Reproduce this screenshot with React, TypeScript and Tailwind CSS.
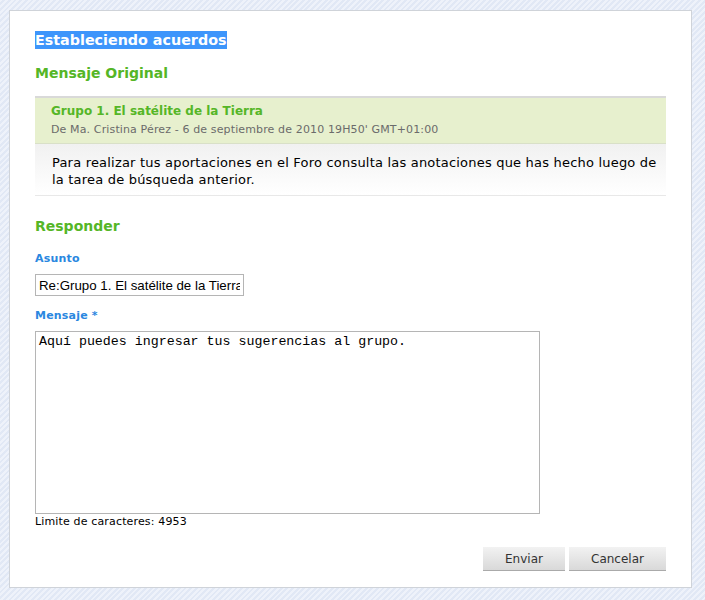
export default function App() {
  return (
    <div className="h-[600px] w-[705px] overflow-hidden bg-[repeating-linear-gradient(135deg,#eef2fa_0px,#eef2fa_2px,#e1e8f5_2px,#e1e8f5_4px)] pt-[10px] pl-[9px] font-['DejaVu_Sans',Verdana,sans-serif]">
      <div className="flex h-[578px] w-[683px] flex-col border border-[#cfd3d9] bg-white px-[25px]">
        <div className="mt-[20px] flex h-[18px]">
          <span className="bg-[#3d95fb] text-[14.3px] leading-[18px] font-bold text-white">Estableciendo acuerdos</span>
        </div>
        <h2 className="mt-[15px] h-[18px] text-[14px] leading-[18px] font-bold text-[#55b627]">Mensaje Original</h2>

        <div className="mt-[14px] border-t-2 border-[#d9d9d9]">
          <div className="h-[46px] border-b border-[#d9e0c8] bg-[#e7f0ce] pl-[16px]">
            <div className="pt-[5px] text-[12px] leading-[16px] font-bold text-[#55b627]">Grupo 1. El satélite de la Tierra</div>
            <div className="pt-[3px] text-[11px] leading-[16px] tracking-[0.13px] text-[#6b6b6b]">De Ma. Cristina Pérez - 6 de septiembre de 2010 19H50' GMT+01:00</div>
          </div>
          <div className="h-[52px] border-b border-[#e8e8e8] bg-gradient-to-b from-[#f1f1f1] to-white pt-[10px] pl-[17px] text-[13px] leading-[17px] tracking-[0.2px] text-black">
            Para realizar tus aportaciones en el Foro consulta las anotaciones que has hecho luego de la tarea de búsqueda anterior.
          </div>
        </div>

        <h2 className="mt-[21px] h-[18px] text-[14px] leading-[18px] font-bold text-[#55b627]">Responder</h2>

        <label className="mt-[17px] h-[14px] text-[11px] leading-[14px] font-bold tracking-[0.2px] text-[#2a87e0]">Asunto</label>
        <input
          readOnly
          value="Re:Grupo 1. El satélite de la Tierra"
          className="mt-[8px] h-[22px] w-[209px] border border-[#b5b5b5] px-[3px] font-['Liberation_Sans',Arial,sans-serif] text-[13.3px] text-black outline-none"
        />

        <label className="mt-[13px] h-[14px] text-[11px] leading-[14px] font-bold tracking-[0.2px] text-[#2a87e0]">Mensaje *</label>
        <textarea
          readOnly
          value="Aquí puedes ingresar tus sugerencias al grupo."
          className="mt-[8px] h-[183px] w-[505px] resize-none border border-[#b5b5b5] px-[3px] py-[2px] font-['Liberation_Mono','Courier_New',monospace] text-[13.3px] leading-[16px] text-black outline-none"
        />
        <div className="mt-[1px] text-[11px] leading-[14px] tracking-[0.15px] text-black">Limite de caracteres: 4953</div>

        <div className="mt-[18px] flex justify-end gap-[4px]">
          <button className="h-[24px] w-[82px] border-b border-[#aaaaaa] bg-gradient-to-b from-[#f2f2f2] to-[#d9d9d9] text-[12px] text-[#333]">Enviar</button>
          <button className="h-[24px] w-[97px] border-b border-[#aaaaaa] bg-gradient-to-b from-[#f2f2f2] to-[#d9d9d9] text-[12px] text-[#333]">Cancelar</button>
        </div>
      </div>
    </div>
  )
}
